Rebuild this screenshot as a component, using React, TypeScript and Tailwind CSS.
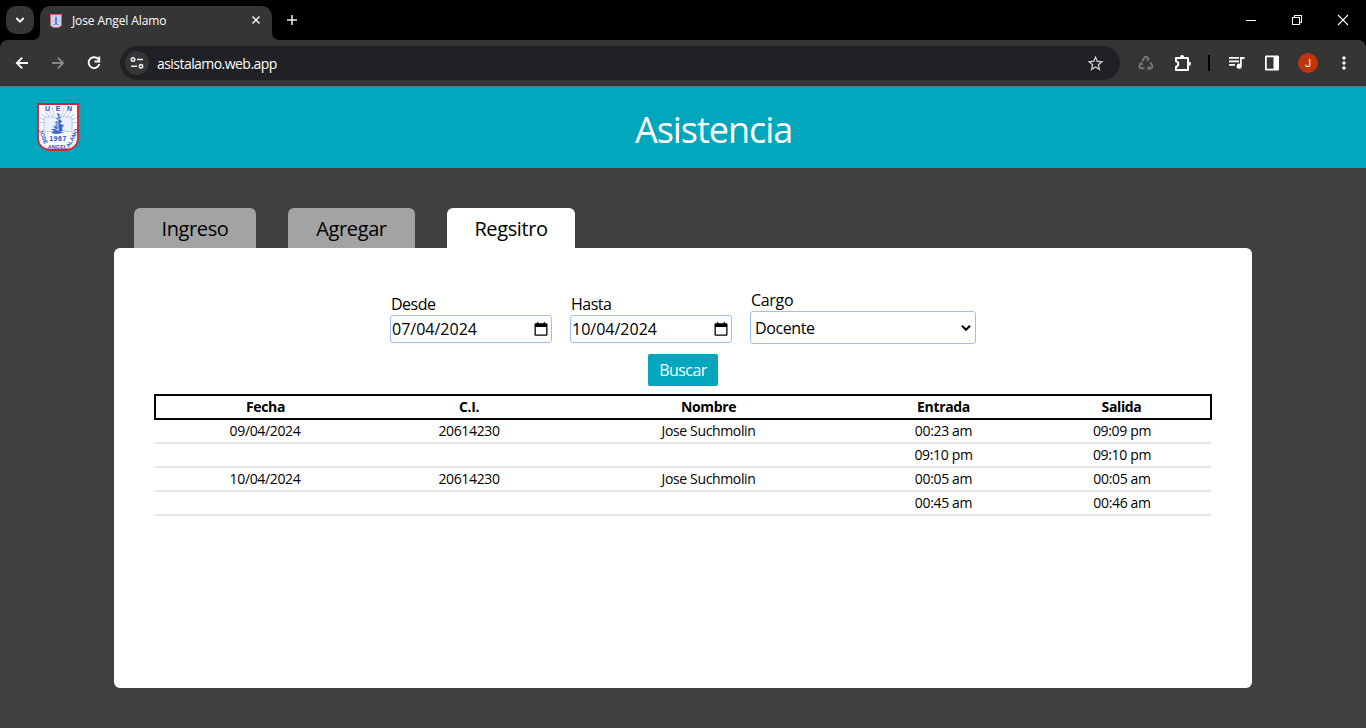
import React from "react";
import { MdStarBorder, MdMoreVert } from "react-icons/md";

function Crest({ className }: { className: string }) {
  const rays = [-78, -66, -54, -42, -30, -18, 18, 30, 42, 54, 66, 78];
  return (
    <svg className={className} viewBox="0 0 42 48">
      <path d="M1 1H41V36Q40 46 29 47H13Q2 46 1 36Z" fill="#fbfcff" stroke="#dc2032" strokeWidth="1.8" />
      <g stroke="#a9bce8" strokeWidth=".8">
        {rays.map((a) => (
          <path key={a} d="M21 13V3" transform={`rotate(${a} 21 23)`} />
        ))}
      </g>
      <path d="M7 15Q14 12 20 16Q28 12 35 15V29Q28 27 21 30Q14 27 7 29Z" fill="#eaf0fc" stroke="#a9bce8" strokeWidth=".8" />
      <path d="M20 10l3 1-1 2 2 1-2 2 3 2-2 3 4 1-2 3 1 3-3 0 3 2-7 1-5-1 3-2-3-2 4 0-2-3 3-1-1-3 3-1-2-3 2-1z" fill="#3767cb" />
      <path d="M17 19l3 2M24 16l2 1M18 26l4 1M21 13v15M16 23l4 0" stroke="#dbe5fb" strokeWidth=".9" />
      <g fill="#1f50c0" fontFamily="Liberation Sans, sans-serif" fontWeight="700" textAnchor="middle">
        <text x="10.5" y="8" fontSize="7">U</text>
        <text x="21" y="8" fontSize="7">E</text>
        <text x="32.5" y="8" fontSize="7">N</text>
        <text x="21" y="38" fontSize="7" letterSpacing=".5">1967</text>
        <text fontSize="5.6" transform="translate(4.6 34.5) rotate(67)">JOSE</text>
        <text x="20.500" y="45.500" fontSize="5.6">ANGEL</text>
        <text fontSize="5.6" transform="translate(37 36) rotate(-62)">ALAMO</text>
      </g>
    </svg>
  );
}

function Favicon() {
  return (
    <svg className="size-4" viewBox="0 0 16 16">
      <path d="M2.5 1.5h11v10q0 3-5.500 3t-5.500-3z" fill="#d3dcf5" stroke="#c8616f" />
      <path d="M4 3h2M7 3h2M10.500 3h1.500M5 11.500h6" stroke="#7e9be0" />
      <path d="M8 4v7" stroke="#5c82d6" strokeWidth="2.200" />
      <path d="M4.500 6v4M11.500 6v4" stroke="#b6c5ee" strokeWidth="1.500" />
    </svg>
  );
}

function TabStrip() {
  return (
    <div className="flex h-10 bg-black">
      <div className="ml-1.5 mt-1.5 grid size-7 place-items-center rounded-[10px] bg-[#353535]">
        <svg className="size-7" viewBox="0 0 28 28" fill="none" stroke="#fff" strokeWidth="1.800">
          <path d="M10.300 12l3.700 3.700 3.700-3.700" />
        </svg>
      </div>
      <div className="relative ml-1.5 mt-1.5 flex h-[34px] w-[232px] items-center rounded-t-[10px] bg-[#353535] pb-[5px]">
        <svg className="absolute -left-2 bottom-0 size-2" viewBox="0 0 8 8" fill="#353535">
          <path d="M8 0v8H0Q8 8 8 0" />
        </svg>
        <svg className="absolute -right-2 bottom-0 size-2" viewBox="0 0 8 8" fill="#353535">
          <path d="M0 0v8h8Q0 8 0 0" />
        </svg>
        <div className="ml-2">
          <Favicon />
        </div>
        <span className="ml-2 whitespace-nowrap text-[12px] tracking-[-0.1px] text-white">Jose Angel Alamo</span>
        <svg className="mb-px ml-auto mr-[11px] size-[10px]" viewBox="0 0 10 10" stroke="#f2f2f2" strokeWidth="1.500">
          <path d="M1.500 1.500l7 7M8.500 1.500l-7 7" />
        </svg>
      </div>
      <svg className="ml-[14px] mt-[14px] size-3" viewBox="0 0 12 12" stroke="#eee" strokeWidth="1.500">
        <path d="M1 6h10M6 1v10" />
      </svg>
      <div className="ml-auto mr-[17px] flex h-10 items-center gap-[34px]">
        <svg className="size-3" viewBox="0 0 12 12" fill="#fff" shapeRendering="crispEdges">
          <path d="M1 6h10v1H1z" />
        </svg>
        <svg className="size-3" viewBox="0 0 12 12" fill="none" stroke="#fff" shapeRendering="crispEdges">
          <path d="M1.500 3.500h7v7h-7zM3.500 3V1.500h7v7H9" />
        </svg>
        <svg className="size-3" viewBox="0 0 12 12" stroke="#fff" strokeWidth="1.100">
          <path d="M1 1l10 10M11 1L1 11" />
        </svg>
      </div>
    </div>
  );
}

function Toolbar() {
  return (
    <div className="bg-black">
      <div className="flex h-[46px] items-center rounded-t-[8px] bg-[#353535] text-white">
        <svg className="ml-[14px] size-4" viewBox="0 0 16 16" fill="none" stroke="#fff" strokeWidth="1.800">
          <path d="M14 8H3M8.200 2.600L2.800 8l5.400 5.400" />
        </svg>
        <svg className="ml-5 size-4" viewBox="0 0 16 16" fill="none" stroke="#868686" strokeWidth="1.800">
          <path d="M2 8h11M7.800 2.600L13.200 8l-5.400 5.400" />
        </svg>
        <svg className="ml-5 size-4" viewBox="0 0 16 16" fill="none" stroke="#fff" strokeWidth="1.800">
          <path d="M12.600 4.700A5.400 5.400 0 1 0 13.300 9M13.300 1.500v5H8.500" />
        </svg>
        <div className="ml-[18px] flex h-[34px] w-[1000px] items-center rounded-full bg-[#202124] pl-[5px] pr-[15px]">
          <div className="grid size-6 place-items-center rounded-full bg-[#353535]">
            <svg className="size-4" viewBox="0 0 16 16" fill="none" stroke="#e8e8e8" strokeWidth="1.600">
              <circle cx="4" cy="4.500" r="1.700" />
              <path d="M8 4.500h6M2 11.300h6" />
              <circle cx="12" cy="11.300" r="1.700" />
            </svg>
          </div>
          <span className="ml-2 text-[14px] tracking-[-0.55px]">asistalamo.web.app</span>
          <MdStarBorder className="ml-auto size-[19px] text-[#d0d0d0]" />
        </div>
        <svg className="ml-[18px] size-4" viewBox="0 0 16 16" fill="none" stroke="#777" strokeWidth="1.900">
          <path d="M4.300 6.200l2.500-4.300h2l1.300 2.300M12.300 7.300l2.200 3.700-1 2.200h-3.500M6.500 13.200H2.300L1.300 11.300l1.500-2.600" />
          <path d="M8.300 5.200h2.500V2.500M11.600 11.300l-2 1.900 2 1.900M1.300 8.600l2.300-.8 1 2.400" strokeWidth="1.200" />
        </svg>
        <svg className="ml-5 size-[18px]" viewBox="0 0 18 18" fill="none" stroke="#fff" strokeWidth="2">
          <path strokeLinejoin="round" d="M2 4h12v12H2v-3.300q2.300-.5 2.300-2.700T2 7.300z" />
          <path d="M6 3.200a2.100 2.300 0 0 1 4.200 0zM14.800 7.700a2.300 2.100 0 0 1 0 4.200z" fill="#fff" stroke="none" />
        </svg>
        <div className="ml-4 h-4 w-[2px] bg-black" />
        <svg className="ml-[18px] size-[18px]" viewBox="0 0 18 18" fill="#fff">
          <path d="M1 3h10v1.800H1zM1 6.500h10v1.800H1zM1 10h6v1.800H1zM12 3h4.500v2h-2.700v7.200a2.600 2.600 0 1 1-1.800-2.500z" />
        </svg>
        <svg className="ml-[18px] size-4" viewBox="0 0 16 16" fill="#fff">
          <path fillRule="evenodd" d="M2 .500h12q1 0 1 1v13q0 1-1 1H2q-1 0-1-1v-13q0-1 1-1zm.800 1.800v11.400h6.700V2.300z" />
        </svg>
        <div className="ml-[18px] grid size-5 place-items-center rounded-full bg-[#bf360c] font-['Roboto',sans-serif] text-[11px] leading-none">J</div>
        <MdMoreVert className="ml-[16px] size-[20px]" />
      </div>
    </div>
  );
}

function DateField({ label, value }: { label: string; value: string }) {
  return (
    <div className="mb-px w-[162px]">
      <div className="pl-px text-[16px] leading-[21px] tracking-[-0.5px]">{label}</div>
      <div className="flex h-7 items-center justify-between rounded-[3px] border border-[#9fbff2] pl-px pr-[3px]">
        <span className="text-[16px] leading-none">{value}</span>
        <svg className="size-[14px]" viewBox="0 0 14 14">
          <path fillRule="evenodd" d="M1.500 1.300H3V0h1.300v1.300h5.400V0H11v1.300h1.500q1 0 1 1v10.400q0 1-1 1h-11q-1 0-1-1V2.300q0-1 1-1zM1.800 5v7.400h10.400V5z" />
        </svg>
      </div>
    </div>
  );
}

const rows = [
  ["09/04/2024", "20614230", "Jose Suchmolin", "00:23 am", "09:09 pm"],
  ["", "", "", "09:10 pm", "09:10 pm"],
  ["10/04/2024", "20614230", "Jose Suchmolin", "00:05 am", "00:05 am"],
  ["", "", "", "00:45 am", "00:46 am"],
];

function Records() {
  return (
    <table className="mx-auto mt-2 w-[1056px] table-fixed border-collapse text-center text-[14px] leading-[20px] tracking-[-0.35px]">
      <colgroup>
        <col className="w-[220px]" />
        <col className="w-[188px]" />
        <col className="w-[291px]" />
        <col className="w-[179px]" />
        <col className="w-[178px]" />
      </colgroup>
      <thead>
        <tr className="h-6 border-2 border-black">
          {["Fecha", "C.I.", "Nombre", "Entrada", "Salida"].map((h) => (
            <th key={h} className="p-0 font-bold">{h}</th>
          ))}
        </tr>
      </thead>
      <tbody>
        {rows.map((r, i) => (
          <tr key={i} className="h-6 border-b-2 border-gray-200">
            {r.map((c, j) => (
              <td key={j} className="p-0">{c}</td>
            ))}
          </tr>
        ))}
      </tbody>
    </table>
  );
}

export default function App() {
  return (
    <div className="h-[728px] w-[1366px] overflow-hidden bg-[#404040] font-['Open_Sans','Noto_Sans',sans-serif] text-black">
      <TabStrip />
      <Toolbar />
      <header className="flex h-[82px] items-center border-t border-[#52777d] bg-[#03a7bd] pl-[37px]">
        <Crest className="mb-0.5 h-12 w-[42px]" />
        <h1 className="ml-[556px] mt-[4px] text-[36px] leading-[40px] tracking-[-1.05px] text-white">Asistencia</h1>
      </header>
      <main className="mx-auto mt-10 w-[1138px]">
        <nav className="flex gap-8 pl-5 text-[20px] tracking-[-0.4px]">
          <button className="h-10 w-[122px] rounded-t-[6px] bg-[#a3a3a3] pt-[2px]">Ingreso</button>
          <button className="h-10 w-[127px] rounded-t-[6px] bg-[#a3a3a3] pt-[2px]">Agregar</button>
          <button className="h-10 w-[128px] rounded-t-[6px] bg-white pt-[2px]">Regsitro</button>
        </nav>
        <section className="h-[440px] rounded-[6px] bg-white pt-[42px]">
          <div className="flex h-[54px] items-end justify-center gap-[18px]">
            <DateField label="Desde" value="07/04/2024" />
            <DateField label="Hasta" value="10/04/2024" />
            <div className="w-[226px]">
              <div className="pl-px text-[16px] leading-[21px] tracking-[-0.3px]">Cargo</div>
              <div className="flex h-[33px] items-center justify-between rounded-[3px] border border-[#9fbff2] pl-1 pr-1">
                <span className="text-[16px] tracking-[-0.4px]">Docente</span>
                <svg className="size-[10px]" viewBox="0 0 10 10" fill="none" stroke="#000" strokeWidth="2">
                  <path d="M1 2.800l4 4 4-4" />
                </svg>
              </div>
            </div>
          </div>
          <button className="mx-auto mt-[10px] block h-8 w-[70px] rounded-[2px] bg-[#03a7bd] text-[16px] tracking-[-0.6px] text-white">
            Buscar
          </button>
          <Records />
        </section>
      </main>
    </div>
  );
}
